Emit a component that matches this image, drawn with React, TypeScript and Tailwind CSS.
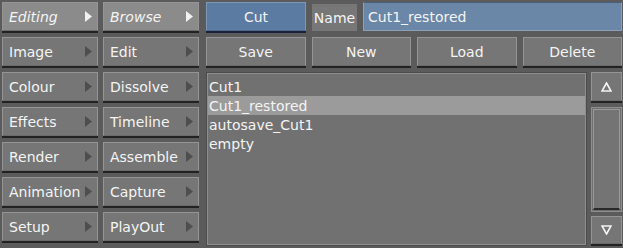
const font = { fontFamily: '"DejaVu Sans", "Liberation Sans", sans-serif' };

function Arrow({ light }: { light?: boolean }) {
  return (
    <svg width="7" height="11" viewBox="0 0 7 11" className="shrink-0">
      <path d="M0 0 L7 5.5 L0 11 Z" fill={light ? "#f2f2f2" : "#4e4e4e"} />
    </svg>
  );
}

function MenuButton({ label, active }: { label: string; active?: boolean }) {
  return (
    <div className="h-[31px] flex flex-col">
      <div
        className={
          "flex-1 flex items-center justify-between pl-[6px] pr-[5px] border border-[#959595] border-b-[#6a6a6a] " +
          (active ? "bg-[#8b8b8b] italic" : "bg-[#767676]")
        }
      >
        <span className="text-[14px] text-[#f4f4f4] leading-none">{label}</span>
        <Arrow light={active} />
      </div>
      <div className="h-[2px] bg-[#222]" />
    </div>
  );
}

function ActionButton({ label }: { label: string }) {
  return (
    <div className="flex-1 h-[31px] flex flex-col">
      <div className="flex-1 flex items-center justify-center bg-[#767676] border border-[#959595] border-b-[#6a6a6a]">
        <span className="text-[14px] text-[#f4f4f4] leading-none">{label}</span>
      </div>
      <div className="h-[2px] bg-[#222]" />
    </div>
  );
}

const left = ["Editing", "Image", "Colour", "Effects", "Render", "Animation", "Setup"];
const mid = ["Browse", "Edit", "Dissolve", "Timeline", "Assemble", "Capture", "PlayOut"];
const items = ["Cut1", "Cut1_restored", "autosave_Cut1", "empty"];

export default function App() {
  return (
    <div className="w-[623px] h-[248px] bg-[#5b5b5b] flex gap-[5px] pl-[2px] pt-[2px] overflow-hidden" style={font}>
      <div className="w-[96px] flex flex-col gap-[4px]">
        {left.map((l, i) => (
          <MenuButton key={l} label={l} active={i === 0} />
        ))}
      </div>
      <div className="w-[96px] flex flex-col gap-[4px]">
        {mid.map((l, i) => (
          <MenuButton key={l} label={l} active={i === 0} />
        ))}
      </div>
      <div className="w-[416px] ml-[2px] flex flex-col gap-[4px]">
        <div className="h-[31px] flex gap-[6px] items-stretch">
          <div className="w-[100px] flex flex-col">
            <div className="flex-1 flex items-center justify-center bg-[#5b7ba2] border border-[#7d97b6] border-b-[#4d6a8e]">
              <span className="text-[14px] text-[#f4f4f4] leading-none">Cut</span>
            </div>
            <div className="h-[2px] bg-[#1a1f3a]" />
          </div>
          <div className="w-[45px] my-[2px] flex items-center justify-center bg-[#777]">
            <span className="text-[14px] text-[#f4f4f4] leading-none">Name</span>
          </div>
          <div className="flex-1 flex items-center pl-[4px] bg-[#6a87a8] border border-[#8aa0bb] border-t-[#4a5f78] mb-[2px]">
            <span className="text-[14px] text-[#f4f4f4] leading-none">Cut1_restored</span>
          </div>
        </div>
        <div className="h-[31px] flex gap-[6px]">
          <ActionButton label="Save" />
          <ActionButton label="New" />
          <ActionButton label="Load" />
          <ActionButton label="Delete" />
        </div>
        <div className="flex-1 flex gap-[4px] pb-[2px]">
          <div className="flex-1 bg-[#717171] border border-[#4c4c4c] flex flex-col">
            <div className="flex-1 border border-[#8e8e8e] pt-[3px]">
              {items.map((t, i) => (
                <div
                  key={t}
                  className={"h-[19px] flex items-center pl-[1px] " + (i === 1 ? "bg-[#9b9b9b]" : "")}
                >
                  <span className="text-[14px] text-[#f4f4f4] leading-none">{t}</span>
                </div>
              ))}
            </div>
          </div>
          <div className="w-[31px] flex flex-col gap-[4px]">
            <div className="h-[31px] flex flex-col">
              <div className="flex-1 flex items-center justify-center bg-[#767676] border border-[#959595] border-b-[#6a6a6a]">
                <svg width="11" height="10" viewBox="0 0 11 10">
                  <path d="M5.5 1 L10 9 L1 9 Z" fill="none" stroke="#f4f4f4" strokeWidth="1.6" />
                </svg>
              </div>
              <div className="h-[2px] bg-[#222]" />
            </div>
            <div className="flex-1 flex flex-col border border-[#8e8e8e] p-[1px] bg-[#6f6f6f]">
              <div className="flex-1 border border-[#9a9a9a] border-b-[#2a2a2a] border-b-2 bg-[#747474]" />
            </div>
            <div className="h-[30px] flex flex-col">
              <div className="flex-1 flex items-center justify-center bg-[#767676] border border-[#959595] border-b-[#6a6a6a]">
                <svg width="11" height="10" viewBox="0 0 11 10">
                  <path d="M5.5 9 L10 1 L1 1 Z" fill="none" stroke="#f4f4f4" strokeWidth="1.6" />
                </svg>
              </div>
              <div className="h-[2px] bg-[#222]" />
            </div>
          </div>
        </div>
      </div>
    </div>
  );
}
